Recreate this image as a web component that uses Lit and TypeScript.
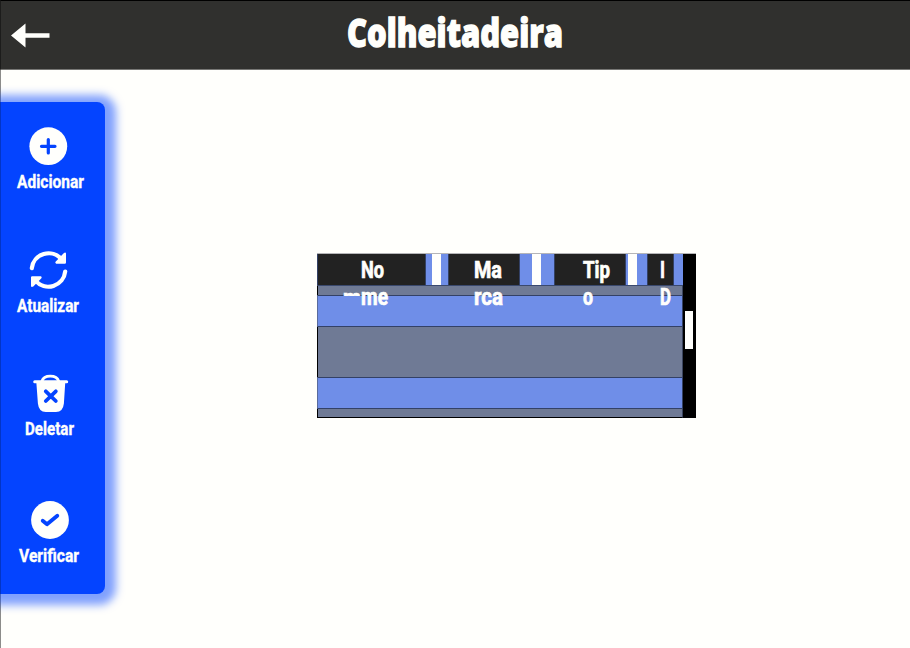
import { LitElement, html, css, svg } from "lit";
import { customElement } from "lit/decorators.js";

// A single line of condensed lettering, fitted to a given width.
const line = (text: string, width: number, height: number, base: number, cls: string) => html`
  <svg class="line ${cls}" width=${width} height=${height}>
    <text x="0" y=${base} textLength=${width} lengthAdjust="spacingAndGlyphs">${text}</text>
  </svg>`;

const plus = svg`<circle cx="20.300" cy="20.200" r="18.900"/><path class="cut" d="M20.300 13.500v13.500M13.500 20.300h13.500"/>`;
const refresh = svg`
  <path class="stroke" d="M3.800 18.200A16.900 16.900 0 0 1 33.500 9.300M37.200 21.500A16.900 16.900 0 0 1 7.500 30.700"/>
  <path d="M38 3.500V12.500Q38 13.700 36.800 13.700H28.200Q26.600 12.900 27.800 11.500L35.700 3.200Q37.700 1.800 38 3.500ZM3 36V27.500Q3 26.200 4.200 26.200H12.800Q14.400 27 13.200 28.400L5.300 36.500Q3.300 37.700 3 36Z"/>`;
const trash = svg`
  <path class="thin" d="M12 8A8.500 6.200 0 0 1 28.600 8"/>
  <path d="M4.700 7.200H36.700Q38.200 7.200 38.200 8.700T36.700 10.200H35.200L33.900 30.500Q33 39 26 39H15.800Q8.800 39 7.900 30.500L6.400 10.200H4.700Q3.200 10.200 3.200 8.700T4.700 7.200Z"/>
  <path class="cut bold" d="M15.800 18.300L25.800 28M25.800 18.300L15.800 28"/>`;
const check = svg`<circle cx="20" cy="20" r="18.900"/><path class="cut bold" d="M12.700 20.800L17 24.300L27.300 15.800"/>`;

const actions = [
  { text: "Adicionar", icon: plus, width: 67, cls: "add" },
  { text: "Atualizar", icon: refresh, width: 62, cls: "update" },
  { text: "Deletar", icon: trash, width: 49, cls: "delete" },
  { text: "Verificar", icon: check, width: 60, cls: "verify" },
];

@customElement("app-root")
export class AppRoot extends LitElement {
  static styles = css`
    :host {
      display: flex; flex-direction: column; box-sizing: border-box;
      width: 910px; height: 648px; overflow: hidden; background: #fffffc;
      font-family: "Roboto", "Liberation Sans", sans-serif;
    }
    .line { display: block; overflow: visible; fill: #fffffc; }
    header {
      box-sizing: border-box; height: 70px; flex: none;
      display: grid; grid-template-columns: 346px auto 1fr; align-items: start;
      background: #30302e; border-top: 1px solid #000; border-bottom: 1px solid #777775;
      border-left: 1px solid #1c1c1b;
    }
    .back { display: block; margin: 21px 0 0 10px; fill: #fffffc; }
    .title { font: 800 38px "Open Sans", sans-serif; stroke: #fffffc; stroke-width: 1.300px; margin-top: 9px; }
    main {
      flex: 1; display: flex; align-items: flex-start;
      background: linear-gradient(#8c8c8a, #8c8c8a) left / 1px 100% no-repeat;
    }
    nav {
      box-sizing: border-box; width: 105px; height: 492px; margin-top: 32px; flex: none;
      background: #0444ff; border-radius: 0 8px 8px 0; border-left: 1px solid #0335c6;
      box-shadow: 2px 2px 9px 9px rgba(4, 68, 255, .5);
      padding-top: 24px; display: flex; flex-direction: column;
    }
    .action {
      display: flex; flex-direction: column; align-items: flex-start; flex: none;
      height: 123.500px; border: 0; padding: 0; background: none; text-align: left;
    }
    .delete { height: 126.500px; }
    .glyph { display: block; flex: none; margin-left: 27px; fill: #fffffc; }
    .delete .glyph, .verify .glyph { margin-left: 28.500px; }
    .cut, .stroke, .thin { fill: none; stroke-linecap: round; stroke-linejoin: round; }
    .cut { stroke: #0444ff; stroke-width: 3.200px; }
    .bold { stroke-width: 3.800px; }
    .stroke { stroke: #fffffc; stroke-width: 4.200px; }
    .thin { stroke: #fffffc; stroke-width: 2.800px; }
    .label { font: 700 17.500px "Roboto", sans-serif; margin: 5px 0 0 16px; stroke: #fffffc; stroke-width: .35px; }
    .delete .label { margin-left: 24px; }
    .verify .label { margin-left: 18px; }
    .panel {
      box-sizing: border-box; width: 379px; height: 165px; margin: 183px 0 0 212px;
      display: grid; grid-template-columns: 366px 13px; border-top: 1px solid #b5b5b8;
    }
    .table {
      display: grid; grid-template-rows: 32px 9px 32px 50px 32px 9px;
      background: #6f7a95; box-sizing: border-box; height: 164px;
      border-left: 1px solid #000; border-bottom: 1px solid #000; border-right: 1px solid #3b455f;
    }
    .row { background: #6f8ee8; border: 1px solid #334166; box-sizing: border-box; margin-left: -1px; border-left-color: #596b9c; }
    .first { grid-row: 3; }
    .second { grid-row: 5; }
    .head {
      grid-row: 1; z-index: 1; box-sizing: border-box; height: 32px; margin-left: -1px;
      display: grid; grid-template-columns: 109px 22px 72px 34px 72px 21px 27px 9px;
      background: #6f8ee8; border-bottom: 1px solid #3a496e;
    }
    .cell { height: 31px; background: #222; box-sizing: border-box; border-left: 1px solid #334166; border-right: 1px solid #334166; }
    .nome { padding-left: 43px; }
    .marca { padding-left: 25px; }
    .tipo { padding-left: 27.500px; }
    .id { padding-left: 11.500px; }
    .bar { width: 9px; height: 31px; background: #fffffc; margin-left: 6px; }
    .wide { margin-left: 12px; }
    .near { margin-left: 2px; }
    .th { font: 700 23px "Roboto", sans-serif; stroke: #fffffc; stroke-width: .7px; }
    .ghost { position: absolute; width: 19px; height: 5px; overflow: hidden; margin: -17px 0 0 -18px; }
    .track { background: #000; height: 164px; box-sizing: border-box; padding: 57px 0 0 2px; }
    .thumb { width: 8px; height: 38px; background: #fffffc; }
  `;

  render() {
    return html`
      <header>
        <svg class="back" width="40" height="26" viewBox="0 0 40 26"><path d="M0 13.500L14.500 1.500V11.200H38.500V15.800H14.500V25.500Z"/></svg>
        ${line("Colheitadeira", 216, 50, 36.5, "title")}
      </header>
      <main>
        <nav>
          ${actions.map(a => html`
            <button class="action ${a.cls}">
              <svg class="glyph" width="40" height="40" viewBox="0 0 40 40">${a.icon}</svg>
              ${line(a.text, a.width, 20, 17, "label")}
            </button>`)}
        </nav>
        <div class="panel">
          <div class="table">
            <div class="head">
              <div class="cell nome">
                ${line("No", 23, 27, 24, "th")}${line("me", 27, 27, 24, "th")}
                <div class="ghost">${line("m", 18, 20, 15, "th")}</div>
              </div>
              <div class="gap"><div class="bar"></div></div>
              <div class="cell marca">${line("Ma", 28, 27, 24, "th")}${line("rca", 29, 27, 24, "th")}</div>
              <div class="gap"><div class="bar wide"></div></div>
              <div class="cell tipo">${line("Tip", 27, 27, 24, "th")}${line("o", 10, 27, 24, "th")}</div>
              <div class="gap"><div class="bar near"></div></div>
              <div class="cell id">${line("I", 5, 27, 24, "th")}${line("D", 11, 27, 24, "th")}</div>
            </div>
            <div class="row first"></div>
            <div class="row second"></div>
          </div>
          <div class="track"><div class="thumb"></div></div>
        </div>
      </main>`;
  }
}
